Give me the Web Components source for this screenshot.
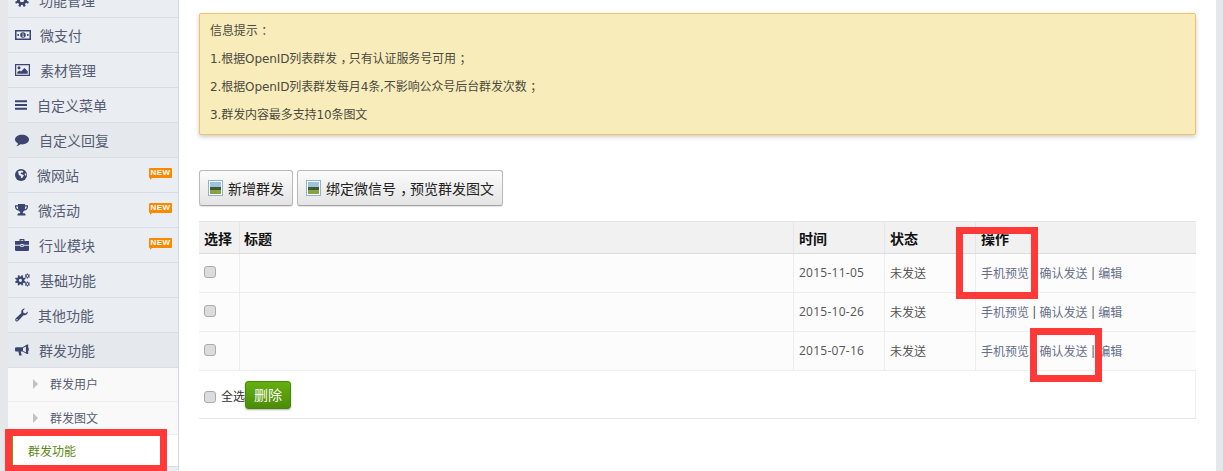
<!DOCTYPE html>
<html lang="zh"><head><meta charset="utf-8"><title>群发功能</title>
<style>
html,body{margin:0;padding:0;height:471px;overflow:hidden}
body{background:#e5e7ea;font:12px "Open Sans","Noto Sans CJK SC",sans-serif;color:#444}
.p{font-feature-settings:"halt";margin-left:.3em;margin-right:.2em}
</style></head><body>
<x-app>
  <x-sidebar slot="side">
    <x-nav icon="gear" w="14" gap="10">功能管理</x-nav>
    <x-nav icon="money" w="16" gap="9">微支付</x-nav>
    <x-nav icon="picture" w="15" gap="10">素材管理</x-nav>
    <x-nav icon="bars" w="12" gap="10">自定义菜单</x-nav>
    <x-nav icon="comment" w="14" gap="10" dark>自定义回复</x-nav>
    <x-nav icon="globe" w="12" gap="10" badge>微网站</x-nav>
    <x-nav icon="trophy" w="13" gap="10" badge>微活动</x-nav>
    <x-nav icon="case" w="14" gap="10" badge>行业模块</x-nav>
    <x-nav icon="cogs" w="15" gap="10">基础功能</x-nav>
    <x-nav icon="wrench" w="13" gap="10">其他功能</x-nav>
    <x-nav icon="horn" w="14" gap="10" dark>群发功能</x-nav>
    <x-sub tall>群发用户</x-sub>
    <x-sub>群发图文</x-sub>
    <x-sub active>群发功能</x-sub>
  </x-sidebar>
  <x-alert>
    <div>信息提示<span class="p">：</span></div>
    <div>1.根据OpenID列表群发<span class="p">，</span>只有认证服务号可用<span class="p">；</span></div>
    <div>2.根据OpenID列表群发每月4条,不影响公众号后台群发次数<span class="p">；</span></div>
    <div>3.群发内容最多支持10条图文</div>
  </x-alert>
  <x-toolbar>
    <x-btn>新增群发</x-btn>
    <x-btn>绑定微信号<span class="p">，</span>预览群发图文</x-btn>
  </x-toolbar>
  <x-table>
    <x-row head><b>选择</b><b>标题</b><b>时间</b><b>状态</b><b>操作</b></x-row>
    <x-row date="2015-11-05"></x-row>
    <x-row date="2015-10-26"></x-row>
    <x-row date="2015-07-16"></x-row>
    <x-tfoot></x-tfoot>
  </x-table>
  <x-mark slot="marks" style="left:956px;top:227px;width:82px;height:72px"></x-mark>
  <x-mark slot="marks" style="left:1030px;top:328px;width:72px;height:54px"></x-mark>
  <x-mark slot="marks" style="left:5px;top:429px;width:162px;height:43px"></x-mark>
</x-app>
<script>
const def=(n,html)=>{class C extends HTMLElement{constructor(){super();this.attachShadow({mode:'open'}).innerHTML=typeof html==='function'?html(this):html}}customElements.define(n,C)};
const gear=(cx,cy,R,hole,n,tw)=>{let t='';const rb=R*.72;for(let i=0;i<n;i++){const a=i*2*Math.PI/n+Math.PI/n;t+=`<line x1="${(cx+Math.cos(a)*rb*.7).toFixed(2)}" y1="${(cy+Math.sin(a)*rb*.7).toFixed(2)}" x2="${(cx+Math.cos(a)*R).toFixed(2)}" y2="${(cy+Math.sin(a)*R).toFixed(2)}" stroke="currentColor" stroke-width="${tw}"/>`}
 const m=(rb+hole)/2;return t+`<circle cx="${cx}" cy="${cy}" r="${m}" fill="none" stroke="currentColor" stroke-width="${rb-hole}"/>`};
const icons={
gear:`<svg viewBox="0 0 14 14">${gear(7,7,7,2.2,8,2.2)}</svg>`,
money:`<svg viewBox="0 0 16 14"><path fill-rule="evenodd" fill="currentColor" d="M0 2h16v10H0zM1.500 3.500v7h13v-7z"/><path fill-rule="evenodd" fill="currentColor" d="M8 4.200a2.800 2.800 0 1 1 0 5.600 2.800 2.800 0 0 1 0-5.600zM7.400 5.600v.7h.3v1.800h-.4v.6h1.600v-.6h-.4V5.600z"/><rect x="2.500" y="6" width="1.400" height="2" fill="currentColor"/><rect x="12.100" y="6" width="1.400" height="2" fill="currentColor"/></svg>`,
picture:`<svg viewBox="0 0 15 14"><path fill-rule="evenodd" fill="currentColor" d="M0 1h15v12H0zM1.200 2.200v9.600h12.600V2.200z"/><circle cx="4" cy="4.800" r="1.500" fill="currentColor"/><path fill="currentColor" d="M2.300 10.800V9l2.300-1.600L6 8.600l3.400-3.600 3.300 3.300v2.500z"/></svg>`,
bars:`<svg viewBox="0 0 12 14"><path fill="currentColor" d="M0 2.300h12v2H0zM0 6h12v2H0zM0 9.700h12v2H0z"/></svg>`,
comment:`<svg viewBox="0 0 14 14"><path fill="currentColor" d="M7 1.800c3.900 0 7 2.100 7 4.800s-3.100 4.800-7 4.800c-.6 0-1.100 0-1.700-.1C4.300 12.400 2.800 13 1.300 13.200 2.300 12.300 3 11.400 3 10.400 1.200 9.500 0 8.200 0 6.600 0 3.900 3.100 1.800 7 1.800z"/></svg>`,
globe:`<svg viewBox="0 0 12 14"><circle cx="6" cy="7" r="6" fill="currentColor"/><path fill="#eaedf1" d="M3 3.600l3-1 2.500.6-1 1.500-1.300-.3-.6 1.400 1.800.6 1.500.9-1.400 2.500-1.500.5-.3-2.400-1.800-.9zM10 5l1.300 1.200-.3 1.700-1.300-1.200z"/></svg>`,
trophy:`<svg viewBox="0 0 13 14"><path fill="currentColor" d="M3 1h7v1.300h3v1.700c0 1.700-1.400 3.300-3.500 3.600-.5.6-1 1-1.600 1.300v1.400h1.200c1 0 1.400.7 1.400 1.500v.7H2.500v-.7c0-.8.4-1.500 1.400-1.500h1.200V8.900c-.6-.3-1.100-.7-1.600-1.300C1.400 7.300 0 5.700 0 4V2.300h3zM1.200 3.500V4c0 .8.700 1.800 2 2.200C3 5.400 3 4.500 3 3.500zm10.600 0H10c0 1 0 1.900-.2 2.700 1.300-.4 2-1.400 2-2.200z"/></svg>`,
case:`<svg viewBox="0 0 14 14"><path fill="currentColor" d="M4.500 3V1.600c0-.4.300-.6.600-.6h3.800c.3 0 .6.200.6.600V3H14v3.800H8.500V6h-3v.8H0V3zm1.200 0h2.600V2.200H5.700zM0 7.800h5.500V9h3V7.800H14v4c0 .6-.4 1.200-1 1.200H1c-.6 0-1-.6-1-1.200zM6.200 7h1.600v1.300H6.200z"/></svg>`,
cogs:`<svg viewBox="0 0 15 14">${gear(5.4,7.3,5.4,1.6,8,1.7)}${gear(12.4,3,2.6,.9,6,1.1)}${gear(12.4,11,2.6,.9,6,1.1)}</svg>`,
wrench:`<svg viewBox="0 0 13 14"><path fill="currentColor" d="M12.800 3.500c.4 2.300-1.800 4.400-4.300 3.700l-5.200 5.600c-.7.800-2 .8-2.600.1s-.7-1.800.1-2.600l5.600-5.300C5.700 2.600 7.500.4 10 .6l-2 2.200.4 2 2 .6zM2 11a.7.7 0 1 0 0 1.400A.7.7 0 0 0 2 11z"/></svg>`,
horn:`<svg viewBox="0 0 14 14"><path fill="currentColor" d="M12 1.500h1.200V11H12L7.500 8.600H5.800l.9 4H4.200l-.8-4H1.200C.5 8.600 0 8 0 7.300V5.500c0-.7.500-1.300 1.200-1.300h6.300zM10.900 3.500 8 4.900v3l2.900 1.400z"/><rect x="13.300" y="4.800" width=".7" height="3" fill="currentColor"/></svg>`
};
def('x-app',`<style>
:host{display:flex;height:471px;padding:0 7px 0 8px;box-sizing:border-box;position:relative;overflow:hidden}
.side{display:block;flex:none;margin-top:-17px;height:488px;background:#eaedf1;border-right:1px solid #d3d9e2;width:170px}
main{flex:1;background:#fff;padding:13px 20px 0;min-width:0;box-sizing:border-box}
</style><div class="side"><slot name="side"></slot></div><main><slot></slot></main><slot name="marks"></slot>`);
def('x-sidebar',`<style>:host{display:block}</style><slot></slot>`);
def('x-nav',h=>`<style>
:host{display:flex;align-items:center;height:34px;border-bottom:1px solid #d8dee7;padding:0 6px 0 7px;font-size:14px;color:#555c72;background:${h.hasAttribute('dark')?'#e5e9ed':'#eaedf1'}}
.i{flex:none;color:#3b4570;width:${h.getAttribute('w')}px;height:14px;margin-right:${h.getAttribute('gap')}px;display:block}
svg{display:block;width:100%;height:100%}
.b{margin-left:auto;position:relative;top:-2px;background:#f98a00;color:#fff;font:700 8px/10px "Liberation Sans",sans-serif;letter-spacing:.4px;width:23px;height:10px;text-align:center;border-radius:1px}
.b::after{content:"";position:absolute;left:1px;top:10px;border-top:2px solid #f98a00;border-right:2px solid transparent}
</style><span class="i">${icons[h.getAttribute('icon')]}</span><slot></slot>${h.hasAttribute('badge')?'<span class="b">NEW</span>':''}`);
def('x-sub',h=>{const a=h.hasAttribute('active'),t=h.hasAttribute('tall');return `<style>
:host{display:flex;align-items:center;box-sizing:content-box;height:${a?31:t?32:31}px;${a?'':'padding-bottom:1px;'}border-bottom:1px solid ${a?'#d8dee7':'#edeef0'};font-size:12px;background:${a?'#fff':'#f9f9f9'};color:${a?'#5b8a12':'#555c72'};padding-left:${a?'15px':'25px'};${a?'margin-left:4px;border-left:1.5px solid #5ea90a;':''}}
.t{width:0;height:0;border-left:5px solid #c2c2c2;border-top:5px solid transparent;border-bottom:5px solid transparent;margin-right:12px}
</style>${a?'':'<span class="t"></span>'}<slot></slot>`});
def('x-alert',`<style>
:host{display:block;height:122px;box-sizing:border-box;background:#f9ecbb;border:1px solid #f0c36d;border-radius:2px;padding:3px 10px 5px;font:12px/28px "DejaVu Sans","Noto Sans CJK SC",sans-serif;letter-spacing:-.1px;color:#4a4a3e;box-shadow:0 2px 4px rgba(0,0,0,.2)}
</style><slot></slot>`);
def('x-toolbar',`<style>:host{display:flex;gap:4px;margin-top:35px}</style><slot></slot>`);
def('x-btn',`<style>
:host{display:flex;align-items:center;height:36px;box-sizing:border-box;padding:0 8px;border:1px solid #b9b9b9;border-bottom-color:#a5a5a5;border-radius:3px;background:linear-gradient(#fbfbfb,#e4e4e4);font-size:14px;color:#222;box-shadow:0 1px 1px rgba(0,0,0,.12)}
svg{width:15px;height:16px;margin-right:5px;flex:none}
</style><svg viewBox="0 0 15 16"><rect x=".5" y=".5" width="14" height="15" fill="#fff" stroke="#8fb1d2"/><rect x="2" y="2" width="11" height="6" fill="#9fc3da"/><rect x="2" y="7" width="11" height="3" fill="#3c5a3a"/><rect x="2" y="10" width="11" height="4" fill="#8aa33c"/></svg><slot></slot>`);
def('x-table',`<style>:host{display:block;margin-top:15px}</style><slot></slot>`);
def('x-row',h=>{
 const head=h.hasAttribute('head'),d=h.getAttribute('date');
 return `<style>
 :host{display:grid;grid-template-columns:41px 554px 91px 91px 1fr;background:${head?'#f1f1f1':'#fcfcfc'};border-bottom:1px solid ${head?'#dcdcdc':'#ececec'};${head?'border-top:1px solid #e4e4e4;height:31px;':'height:38px;'}font-size:${head?14:12}px;color:#555;box-sizing:content-box}
 .c,::slotted(b){display:flex;align-items:center;padding-left:5px;box-sizing:border-box;min-width:0}
 ::slotted(b){border-right:1px solid #e6e6e6;color:#111;font-weight:700}
 ::slotted(b:last-child){border-right:0}
 ::slotted(b:nth-child(2)){padding-left:4px}
 .c{border-right:1px solid #ededed;padding-bottom:1px}.c:last-child{border-right:0}
 .d{letter-spacing:.25px}
 input{appearance:none;margin:0 0 1px;width:12px;height:12px;border:1px solid #ababab;border-radius:3px;background:#dcdcdc}
 a{color:#676f8c;text-decoration:none}i{font-style:normal;color:#333;margin:0 2px}
 </style>${head?'<slot></slot>':`<div class="c"><input type="checkbox" aria-label="选择"></div><div class="c"></div><div class="c d">${d}</div><div class="c">未发送</div><div class="c"><a>手机预览</a><i>|</i><a>确认发送</a><i>|</i><a>编辑</a></div>`}`});
def('x-tfoot',`<style>
:host{display:flex;align-items:center;height:42px;padding:5px 0 0 5px;border-bottom:1px solid #e6e6e6;border-right:1px solid #eee;font-size:12px;color:#333;box-sizing:content-box}
input{appearance:none;margin:0 5px 0 0;width:12px;height:12px;border:1px solid #ababab;border-radius:3px;background:#dcdcdc}
span{padding-bottom:2px}
button{all:unset;box-sizing:border-box;width:46px;height:28px;text-align:center;line-height:26px;font-size:14px;color:#fff;border:1px solid #4a8506;border-radius:3px;background:linear-gradient(#64b010,#4c8c08);box-shadow:0 1px 2px rgba(0,0,0,.3);margin-top:-4px}
</style><input type="checkbox" aria-label="全选"><span>全选</span><button>删除</button>`);
def('x-mark',`<style>:host{display:block;position:absolute;box-sizing:border-box;border:7px solid #ff3838}</style>`);
</script>
</body></html>
